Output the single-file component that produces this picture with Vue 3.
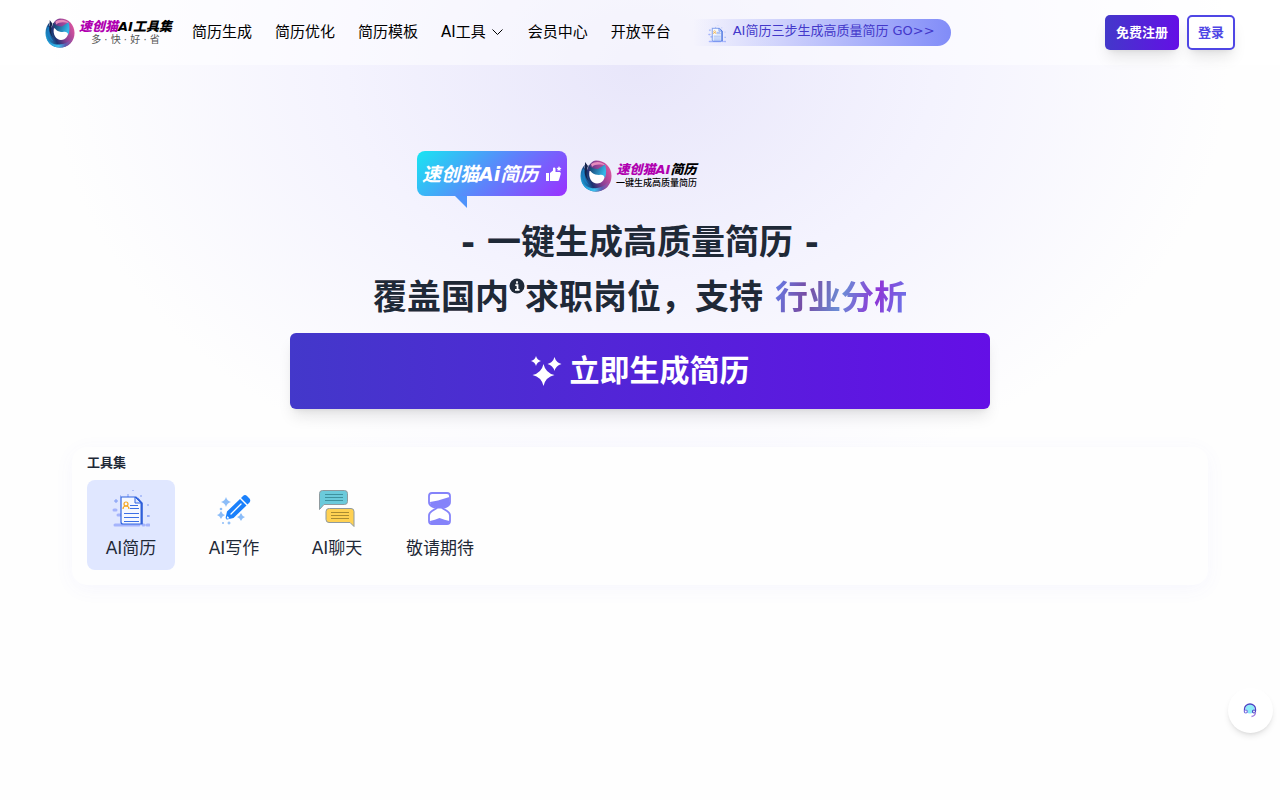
<!--
  Landing page for the resume generator: header with navigation,
  hero with the main call to action and the list of available tools.
-->

<template>
  <div class="page">
    <!-- Shared logo mark -->
    <svg class="defs" width="0" height="0" aria-hidden="true">
      <defs>
        <linearGradient id="ring" x1="0" y1="0.7" x2="1" y2="0.3">
          <stop offset="0" stop-color="#1fa8dd" />
          <stop offset="0.3" stop-color="#1b3270" />
          <stop offset="0.6" stop-color="#8a3f94" />
          <stop offset="1" stop-color="#e0559f" />
        </linearGradient>
        <linearGradient id="ring-low" x1="0" y1="0" x2="1" y2="0">
          <stop offset="0" stop-color="#1b8fd0" />
          <stop offset="0.45" stop-color="#3cc0ee" />
          <stop offset="0.7" stop-color="#5a5cb0" />
          <stop offset="1" stop-color="#c04a9c" />
        </linearGradient>
        <linearGradient id="cat" x1="0" y1="0" x2="1" y2="0.3">
          <stop offset="0" stop-color="#14305f" />
          <stop offset="1" stop-color="#35b6e8" />
        </linearGradient>
        <symbol id="mark" viewBox="0 0 32 32">
          <path
            fill="url(#ring)"
            d="M16 0.500C25 0.500 31.500 7 31.500 16S25 31.500 16 31.500S0.500 25 0.500 16C0.500 11 2.500 7 5 4.500C4 8 5 9.500 7 10C9 4 12 1 16 0.500Z"
          />
          <path
            fill="url(#ring-low)"
            d="M1.500 21C5 27 11 29 17 28C24 27 28 23 30.500 18C30 26 23 32 15 31.500C8 31 3 27 1.500 21Z"
          />
          <path fill="#1a7fc4" d="M3 9C1 15 3 22 9 25C5 20 4 15 5 10Z" />
          <path fill="#14224a" d="M5 2L8 6C6 11 6 17 9 21C5 18 4 12 5 8Z" />
          <path fill="#e58abd" d="M11 4C15 1 22 1 26 6C21 4 15 4 12 7Z" />
          <path fill="#fff" d="M9.500 11L24.500 12C26 19 22 23.500 17 23.500S8 18 9.500 11Z" />
          <path
            fill="url(#cat)"
            d="M8.500 5C11 8 14 9 18 9L25 4.500C26.500 9 26.500 14 25 18C24 15 22 14 19 15C14 15 9 12 8.500 5Z"
          />
        </symbol>
        <symbol id="resume" viewBox="0 0 38 38">
          <path
            d="M3 35h24M31 35h1M35 35h2M6 25h5M2 20h2"
            stroke="#a5b4fc"
            stroke-width="3"
            stroke-linecap="round"
          />
          <path
            d="M4 9v4M2 11h4M16 4v3M29 5v2M36 14v2M36 25v2M35 26h3M21 0v1M8 6h1"
            stroke="#7f9af5"
            stroke-width="1"
          />
          <path
            d="M9 7h15l6 6v21H11a2 2 0 0 1-2-2Z"
            fill="#f5f8ff"
            stroke="#2f63e0"
            stroke-width="1.200"
          />
          <path d="M28.500 13v21h2V13l-5-6Z" fill="#2f5fd8" />
          <path d="M23 7v6h6Z" fill="#dce6ff" stroke="#2f63e0" stroke-width="1" />
          <path
            d="M18 15.500h8M18 18.500h9M12 23.500h15M12 27.500h15M12 31.500h15"
            stroke="#3b6fe5"
            stroke-width="1"
          />
          <circle cx="14" cy="14" r="2" fill="none" stroke="#f5a623" stroke-width="1.200" />
          <path d="M11 19c0-4 6-4 6 0" fill="none" stroke="#f5a623" stroke-width="1.200" />
        </symbol>
      </defs>
    </svg>

    <header class="header">
      <a class="logo" href="#">
        <svg class="logo-mark" aria-hidden="true"><use href="#mark" /></svg>
        <span class="logo-text">
          <span class="logo-name"><b>速创猫</b>AI工具集</span>
          <span class="logo-slogan">多 · 快 · 好 · 省</span>
        </span>
      </a>

      <nav class="nav">
        <a v-for="item in navItems" :key="item.label" class="nav-link" href="#">
          {{ item.label }}
          <svg v-if="item.dropdown" width="15" height="15" viewBox="0 0 15 15" aria-hidden="true">
            <path d="M2.500 5.500l5 5 5-5" fill="none" stroke="currentColor" stroke-width="1" />
          </svg>
        </a>
      </nav>

      <a class="promo" href="#">
        <svg class="promo-icon" aria-hidden="true"><use href="#resume" /></svg>
        AI简历三步生成高质量简历 GO&gt;&gt;
      </a>

      <div class="auth">
        <button class="btn btn-primary" type="button">免费注册</button>
        <button class="btn btn-outline" type="button">登录</button>
      </div>
    </header>

    <main>
      <section class="hero">
        <div class="brand-row">
          <div class="bubble">
            速创猫Ai简历
            <svg width="16" height="16" viewBox="0 0 16 16" fill="currentColor" aria-hidden="true">
              <path d="M0 7h3v8H0Z" />
              <path
                d="M4 7l3-2.500V2.500C7 1 9.500 1 9.500 3v3h4c1 0 1.500 1 1.200 2l-1.700 6c-.2.700-.8 1-1.500 1H4Z"
              />
              <path d="M13 0l.8 1.700 1.700.3-1.200 1.300.2 1.700-1.500-.8-1.500.8.2-1.700L10.500 2l1.700-.3Z" />
            </svg>
          </div>
          <div class="logo">
            <svg class="logo-mark" aria-hidden="true"><use href="#mark" /></svg>
            <span class="logo-text">
              <span class="logo-name"><b>速创猫AI</b>简历</span>
              <span class="logo-tagline">一键生成高质量简历</span>
            </span>
          </div>
        </div>

        <h1 class="title">
          <span>- 一键生成高质量简历 -</span>
          <span class="title-line">
            覆盖国内<svg class="info" viewBox="0 0 16 16" aria-hidden="true">
              <circle cx="8" cy="8" r="7.500" fill="currentColor" />
              <path
                d="M8 3.200v2.300M6.300 7.200H8.500v4.600M6 11.900h4.500"
                fill="none"
                stroke="#fff"
                stroke-width="1.800"
              /></svg>求职岗位，支持
            <span class="highlight">行业分析</span>
          </span>
        </h1>

        <button class="cta" type="button">
          <svg width="32" height="32" viewBox="0 0 32 32" fill="currentColor" aria-hidden="true">
            <path d="M12.500 9q2 9 11 11-9 2-11 11-2-9-11-11 9-2 11-11Z" />
            <path d="M5 1q1 4 5 5-4 1-5 5-1-4-5-5 4-1 5-5Z" />
            <path d="M23.500 2q1.500 5.500 7 7-5.500 1.500-7 7-1.500-5.500-7-7 5.500-1.500 7-7Z" />
          </svg>
          立即生成简历
        </button>
      </section>

      <section class="tools">
        <h2 class="tools-title">工具集</h2>
        <div class="tools-list">
          <a
            v-for="tool in tools"
            :key="tool.id"
            class="tool"
            :class="{ active: tool.id === activeTool }"
            href="#"
            @click.prevent="activeTool = tool.id"
          >
            <svg v-if="tool.id === 'resume'" class="tool-icon" aria-hidden="true">
              <use href="#resume" />
            </svg>
            <svg v-else-if="tool.id === 'write'" class="tool-icon" viewBox="0 0 38 38" aria-hidden="true">
              <g fill="#8cbdf8">
                <path d="M11 7q1 4 5 5-4 1-5 5-1-4-5-5 4-1 5-5Z" />
                <path d="M6 21q1 3 4 4-3 1-4 4-1-3-4-4 3-1 4-4Z" />
                <path d="M26 23q1 3 4 4-3 1-4 4-1-3-4-4 3-1 4-4Z" />
                <path d="M14 31q.5 1.500 2 2-1.500.5-2 2-.5-1.500-2-2 1.500-.5 2-2Z" />
                <circle cx="6" cy="19" r="1.300" />
                <circle cx="8" cy="33" r="1" />
              </g>
              <path
                fill="#1a80fb"
                d="M12 21.500L25 9l6.500 6.500L18.500 28l-6.500 1.500Q10 29 11 26ZM26 8L28 6Q30 4 32 6l2.500 2.500Q36 10.500 34.500 12.500l-2 2Z"
              />
              <path
                d="M16 24L26 14"
                stroke="#fff"
                stroke-width="1.300"
                stroke-linecap="round"
              />
              <path d="M11.500 28.500l1-2.500 2 2.500Z" fill="#fff" />
            </svg>
            <svg v-else-if="tool.id === 'chat'" class="tool-icon" viewBox="0 0 38 38" aria-hidden="true">
              <g stroke="#8f9a9e" stroke-width="1" stroke-linejoin="round">
                <path
                  fill="#6bcadb"
                  d="M4.500.5h22a3 3 0 0 1 3 3v8a3 3 0 0 1-3 3H6l-4.500 5v-16a3 3 0 0 1 3-3Z"
                />
                <path
                  fill="#ffd152"
                  d="M11.500 18.500h21.500a3 3 0 0 1 3 3v15l-4-4H11a3 3 0 0 1-3-3v-8a3 3 0 0 1 3-3Z"
                />
              </g>
              <path d="M7 4.500h18M7 7.500h18M7 10.500h18" stroke="#3e929f" stroke-width="1" />
              <path d="M13 22.500h18M13 25.500h18M13 28.500h18" stroke="#a98b32" stroke-width="1" />
            </svg>
            <svg v-else class="tool-icon" viewBox="0 0 38 38" aria-hidden="true">
              <path
                fill="#fff"
                stroke="#8583fa"
                stroke-width="1.800"
                d="M11 3h15q3 0 3 3v6q0 3-3 4.500l-4 2 4 2.500q3 2 3 4.500v5.500q0 3-3 3H11q-3 0-3-3v-5.500q0-2.500 3-4.500l4-2.500-4-2Q8 15 8 12V6q0-3 3-3Z"
              />
              <path fill="#8583fa" d="M9 12l8-1.500L28.500 7v5q0 3-3 4.500L21 18.500h-5L11 16Q9 15 9 12Z" />
              <path fill="#8583fa" d="M9 31q5-1 9.500-3 5 2 10 3-.5 3-3 3H12q-3 0-3-3Z" />
            </svg>
            <span class="tool-label">{{ tool.label }}</span>
          </a>
        </div>
      </section>
    </main>

    <!-- Customer service -->
    <button class="service" type="button" aria-label="客服">
      <svg width="15" height="15" viewBox="0 0 15 15" fill="none" aria-hidden="true">
        <circle cx="7" cy="6" r="4.500" fill="#8cecf8" />
        <path d="M1.500 8V6a5.500 5 0 0 1 11 0v2" stroke="#4b45c4" stroke-width="1.300" />
        <circle cx="2.800" cy="8.500" r="1.500" fill="#fff" stroke="#7a6fe0" stroke-width="1.200" />
        <circle cx="11" cy="8.500" r="1.500" fill="#fff" stroke="#4b45c4" stroke-width="1.200" />
        <path d="M12.500 9q0 4-4 4.500" stroke="#a07fe0" stroke-width="1.300" />
      </svg>
    </button>
  </div>
</template>

<script setup>
import { ref } from 'vue'

const navItems = [
  { label: '简历生成' },
  { label: '简历优化' },
  { label: '简历模板' },
  { label: 'AI工具', dropdown: true },
  { label: '会员中心' },
  { label: '开放平台' },
]

const tools = [
  { id: 'resume', label: 'AI简历' },
  { id: 'write', label: 'AI写作' },
  { id: 'chat', label: 'AI聊天' },
  { id: 'soon', label: '敬请期待' },
]

const activeTool = ref('resume')
</script>

<style>
body {
  margin: 0;
  background: #fefefe;
}
</style>

<style scoped>
.page {
  min-height: 100vh;
  font-family: 'DejaVu Sans', 'Noto Sans CJK SC', sans-serif;
  font-size: 15px;
  color: #1f2937;
  background: radial-gradient(ellipse 46% 440px at 50% 64px, #e8e6fa, #f4f3fe 50%, #fefefe) no-repeat;
}

.page * {
  box-sizing: border-box;
}

.defs {
  position: absolute;
}

a {
  color: inherit;
  text-decoration: none;
}

button {
  font-family: inherit;
  cursor: pointer;
}

/* Header */
.header {
  display: flex;
  align-items: center;
  height: 65px;
  padding: 0 45px;
  background: rgba(255, 255, 255, 0.5);
}

.logo {
  display: flex;
  align-items: center;
  gap: 4px;
  white-space: nowrap;
}

.logo-mark {
  width: 32px;
  height: 32px;
  flex: none;
}

.header .logo {
  margin-right: 20px;
}

.header .logo-mark {
  width: 30px;
  height: 30px;
}

.logo-text {
  display: flex;
  flex-direction: column;
  align-items: center;
}

.logo-name {
  font-size: 13px;
  line-height: 14px;
  font-weight: 900;
  font-style: italic;
  color: #000;
}

.logo-name b {
  font-weight: 900;
  color: #b000b0;
}

.logo-slogan {
  font-size: 10px;
  line-height: 12px;
  color: #555;
}

.logo-tagline {
  font-size: 9px;
  line-height: 13px;
  font-weight: 500;
  color: #000;
}

.nav {
  display: flex;
  gap: 23px;
  margin-right: 22px;
}

.nav-link {
  display: flex;
  align-items: center;
  gap: 4px;
  line-height: 20px;
  white-space: nowrap;
  color: #000;
}

.header .nav {
  padding-bottom: 2px;
}

.promo {
  display: flex;
  align-items: center;
  gap: 7px;
  height: 27px;
  padding: 0 16px 0 15px;
  border-radius: 0 14px 14px 0;
  font-size: 13px;
  line-height: 24px;
  white-space: nowrap;
  color: #4338ca;
  background: linear-gradient(90deg, transparent, #818cf8);
}

.promo {
  align-items: flex-start;
}

.promo-icon {
  width: 18px;
  height: 18px;
  margin-top: 6px;
}

.auth {
  display: flex;
  gap: 8px;
  margin-left: auto;
}

.btn {
  height: 35px;
  padding: 0 11px;
  border: 0;
  border-radius: 5px;
  font-size: 13px;
  line-height: 20px;
  font-weight: 700;
  white-space: nowrap;
  box-shadow: 0 10px 15px -3px rgba(0, 0, 0, 0.1), 0 4px 6px -4px rgba(0, 0, 0, 0.1);
}

.btn-primary {
  color: #fff;
  background: linear-gradient(90deg, #4338ca, #640fe6);
}

.btn-outline {
  padding: 0 9px;
  border: 2px solid #4f46e5;
  color: #4f46e5;
  background: #fff;
}

/* Hero */
.hero {
  display: flex;
  flex-direction: column;
  align-items: center;
  padding: 86px 15px 38px;
}

.brand-row {
  display: flex;
  gap: 13px;
  width: 100%;
  max-width: 446px;
  margin-bottom: 19px;
}

.brand-row .logo {
  margin-top: 5px;
}

.bubble {
  position: relative;
  display: flex;
  align-items: center;
  justify-content: space-between;
  width: 150px;
  height: 45px;
  padding: 0 5px;
  border-radius: 8px;
  font-size: 19px;
  line-height: 28px;
  font-weight: 700;
  font-style: italic;
  white-space: nowrap;
  color: #fff;
  background: linear-gradient(135deg, #18e6f2, #5b86fb 50%, #9b30ff);
}

.bubble::after {
  content: '';
  position: absolute;
  top: 100%;
  left: 38px;
  border-top: 12px solid #4f93fb;
  border-left: 12px solid transparent;
}

.title {
  display: flex;
  flex-direction: column;
  align-items: center;
  margin: 0 0 8px;
  font-size: 34px;
  line-height: 55px;
  font-weight: 700;
  text-align: center;
}

.info {
  width: 16px;
  height: 16px;
  vertical-align: 15px;
}

.highlight {
  font-size: 33px;
  color: transparent;
  background: linear-gradient(105deg, #667eea, #764ba2, #6b8dd6, #8e37d7, #667eea);
  background-clip: text;
}

.cta {
  display: flex;
  align-items: center;
  justify-content: center;
  gap: 7px;
  width: 100%;
  max-width: 700px;
  height: 76px;
  border: 0;
  border-radius: 6px;
  font-size: 30px;
  line-height: 36px;
  font-weight: 700;
  color: #fff;
  background: linear-gradient(90deg, #4338ca, #640fe6);
  box-shadow: 0 10px 15px -3px rgba(0, 0, 0, 0.1), 0 4px 6px -4px rgba(0, 0, 0, 0.1);
}

/* Tools */
.tools {
  margin: 0 72px;
  padding: 6px 15px 15px;
  border-radius: 15px;
  background: #fefefe;
  box-shadow: 0 4px 20px rgba(99, 102, 241, 0.05);
}

.tools-title {
  margin: 0 0 7px;
  font-size: 13px;
  line-height: 20px;
  font-weight: 700;
}

.tools-list {
  display: flex;
  flex-wrap: wrap;
  gap: 15px;
}

.tool {
  display: flex;
  flex-direction: column;
  align-items: center;
  width: 88px;
  height: 90px;
  padding-top: 10px;
  border-radius: 8px;
}

.tool.active {
  background: #e0e7ff;
}

.tool-icon {
  width: 38px;
  height: 38px;
}

.tool-label {
  margin-top: 7px;
  font-size: 17px;
  line-height: 26px;
  white-space: nowrap;
}

/* Floating service button */
.service {
  position: fixed;
  right: 7px;
  bottom: 67px;
  display: flex;
  align-items: center;
  justify-content: center;
  width: 45px;
  height: 45px;
  padding: 0;
  border: 0;
  border-radius: 50%;
  background: #fff;
  box-shadow: 0 4px 6px -1px rgba(0, 0, 0, 0.1), 0 2px 4px -2px rgba(0, 0, 0, 0.1);
}
</style>
